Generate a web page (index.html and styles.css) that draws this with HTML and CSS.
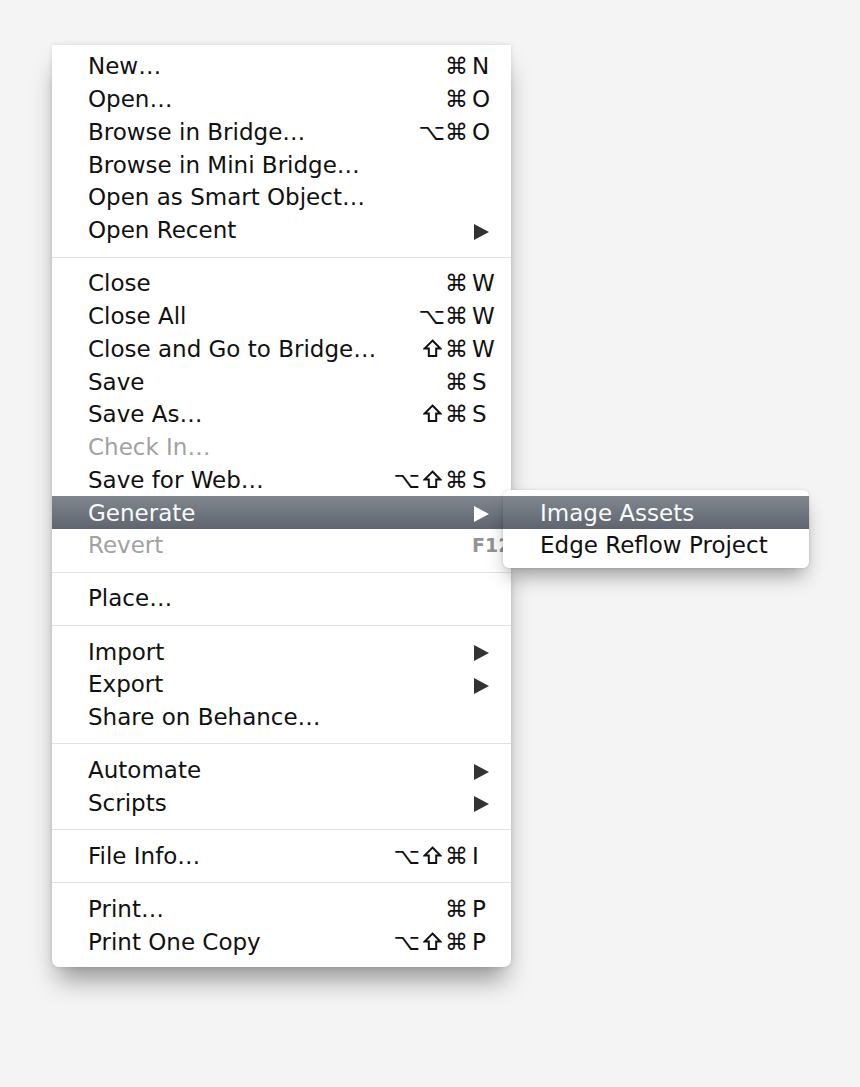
FILE: index.html
```html
<!DOCTYPE html>
<html lang="en">
<head>
    <meta charset="UTF-8">
    <title>File menu</title>
    <link rel="stylesheet" href="styles.css">
</head>
<body>
    <div class="stage">
        <div class="menu">
            <div class="item"><span class="label">New…</span><span class="mods">⌘</span><span class="key">N</span></div>
            <div class="item"><span class="label">Open…</span><span class="mods">⌘</span><span class="key">O</span></div>
            <div class="item"><span class="label">Browse in Bridge…</span><span class="mods">⌥⌘</span><span class="key">O</span></div>
            <div class="item"><span class="label">Browse in Mini Bridge…</span></div>
            <div class="item"><span class="label">Open as Smart Object…</span></div>
            <div class="item"><span class="label">Open Recent</span><span class="mods"></span><span class="key"><span class="arrow"></span></span></div>
            <div class="sep"></div>
            <div class="item"><span class="label">Close</span><span class="mods">⌘</span><span class="key">W</span></div>
            <div class="item"><span class="label">Close All</span><span class="mods">⌥⌘</span><span class="key">W</span></div>
            <div class="item"><span class="label">Close and Go to Bridge…</span><span class="mods"><svg class="shift" viewBox="0 0 18 18"><path d="M9 1.5 L16.5 9 H12.5 V16 H5.5 V9 H1.5 Z"/></svg>⌘</span><span class="key">W</span></div>
            <div class="item"><span class="label">Save</span><span class="mods">⌘</span><span class="key">S</span></div>
            <div class="item"><span class="label">Save As…</span><span class="mods"><svg class="shift" viewBox="0 0 18 18"><path d="M9 1.5 L16.5 9 H12.5 V16 H5.5 V9 H1.5 Z"/></svg>⌘</span><span class="key">S</span></div>
            <div class="item disabled"><span class="label">Check In…</span></div>
            <div class="item"><span class="label">Save for Web…</span><span class="mods">⌥<svg class="shift" viewBox="0 0 18 18"><path d="M9 1.5 L16.5 9 H12.5 V16 H5.5 V9 H1.5 Z"/></svg>⌘</span><span class="key">S</span></div>
            <div class="item active">
                <span class="label">Generate</span><span class="mods"></span><span class="key"><span class="arrow"></span></span>
                <div class="submenu">
                    <div class="item active"><span class="label">Image Assets</span></div>
                    <div class="item"><span class="label">Edge Reflow Project</span></div>
                </div>
            </div>
            <div class="item disabled"><span class="label">Revert</span><span class="mods"></span><span class="key fkey">F12</span></div>
            <div class="sep"></div>
            <div class="item"><span class="label">Place…</span></div>
            <div class="sep"></div>
            <div class="item"><span class="label">Import</span><span class="mods"></span><span class="key"><span class="arrow"></span></span></div>
            <div class="item"><span class="label">Export</span><span class="mods"></span><span class="key"><span class="arrow"></span></span></div>
            <div class="item"><span class="label">Share on Behance…</span></div>
            <div class="sep"></div>
            <div class="item"><span class="label">Automate</span><span class="mods"></span><span class="key"><span class="arrow"></span></span></div>
            <div class="item"><span class="label">Scripts</span><span class="mods"></span><span class="key"><span class="arrow"></span></span></div>
            <div class="sep"></div>
            <div class="item"><span class="label">File Info…</span><span class="mods">⌥<svg class="shift" viewBox="0 0 18 18"><path d="M9 1.5 L16.5 9 H12.5 V16 H5.5 V9 H1.5 Z"/></svg>⌘</span><span class="key">I</span></div>
            <div class="sep"></div>
            <div class="item"><span class="label">Print…</span><span class="mods">⌘</span><span class="key">P</span></div>
            <div class="item"><span class="label">Print One Copy</span><span class="mods">⌥<svg class="shift" viewBox="0 0 18 18"><path d="M9 1.5 L16.5 9 H12.5 V16 H5.5 V9 H1.5 Z"/></svg>⌘</span><span class="key">P</span></div>
        </div>
    </div>
</body>
</html>
```

FILE: styles.css
```css
body {
    margin: 0;
    background-color: #f4f4f4;
    font-family: "DejaVu Sans", Verdana, sans-serif;
    font-size: 23px;
    color: #111;
}
.stage {
    min-height: 100vh;
    box-sizing: border-box;
    padding: 45px 0 0 52px;
}
.menu {
    width: 459px;
    padding: 5px 0 9px;
    background-color: #fff;
    border-radius: 0 0 7px 7px;
    box-shadow: 0 18px 26px -6px rgba(0, 0, 0, 0.4), 0 0 5px rgba(0, 0, 0, 0.12);
}
.item {
    position: relative;
    display: grid;
    grid-template-columns: 1fr auto 22px;
    align-items: center;
    height: 32.75px;
    padding: 0 17px 0 36px;
    white-space: nowrap;
}
.mods {
    display: flex;
    justify-content: flex-end;
    align-items: center;
    gap: 3px;
    margin-right: 4px;
}
.shift {
    width: 19px;
    height: 19px;
    margin-top: -1px;
}
.shift path {
    fill: none;
    stroke: #111;
    stroke-width: 1.9;
}
.fkey {
    font-size: 19px;
    font-weight: bold;
    color: #939393;
}
.arrow {
    display: inline-block;
    width: 0;
    height: 0;
    margin-left: 2px;
    border-top: 8px solid transparent;
    border-bottom: 8px solid transparent;
    border-left: 15px solid #333;
    vertical-align: middle;
}
.disabled {
    color: #a2a2a2;
}
.active {
    color: #fafafa;
    background: linear-gradient(#80878f, #5e656e);
}
.active .arrow {
    border-left-color: #fff;
}
.sep {
    height: 1px;
    margin: 10px 0 9.4px;
    background-color: #e2e2e2;
}
.submenu {
    position: absolute;
    left: 451px;
    top: -6px;
    z-index: 1;
    width: 306px;
    padding: 6px 0;
    color: #111;
    background-color: #fff;
    border-radius: 6px;
    box-shadow: 0 12px 20px -5px rgba(0, 0, 0, 0.38), 0 0 3px rgba(0, 0, 0, 0.15);
}
.submenu .item {
    grid-template-columns: 1fr;
    padding: 0 0 0 37px;
}
.submenu .active {
    color: #fafafa;
}
```
